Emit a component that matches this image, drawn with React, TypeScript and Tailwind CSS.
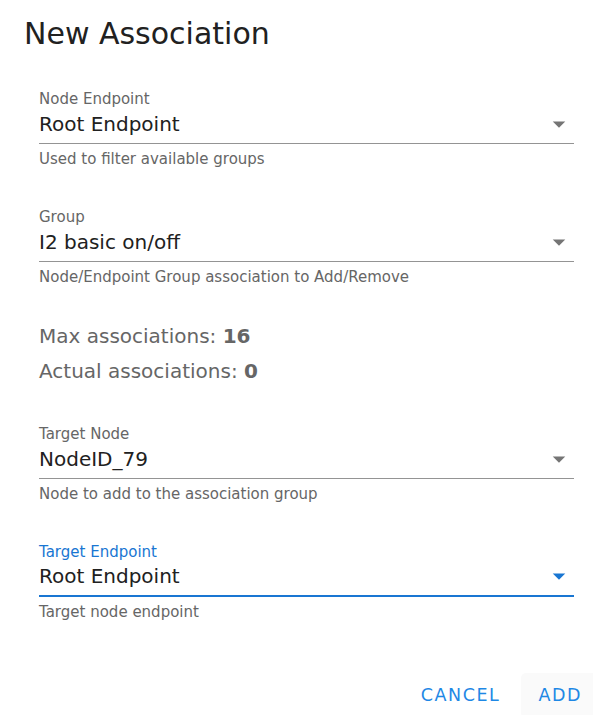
import React from "react";

function Arrow({ blue }: { blue?: boolean }) {
  return (
    <svg width="30" height="30" viewBox="0 0 24 24" className="shrink-0">
      <path d="M7 10l5 5 5-5z" fill={blue ? "#1976d2" : "#757575"} />
    </svg>
  );
}

function Field({
  label,
  value,
  hint,
  focused,
}: {
  label: string;
  value: string;
  hint: string;
  focused?: boolean;
}) {
  return (
    <div className="w-[535px]">
      <div
        className={`text-[15px] leading-[20px] ${focused ? "text-[#1976d2]" : "text-[#666666]"}`}
      >
        {label}
      </div>
      <div
        className={`flex items-center justify-between h-[35px] pb-[5px] ${
          focused ? "border-b-2 border-[#1976d2]" : "border-b border-[#949494]"
        }`}
      >
        <span className="text-[20px] leading-[30px] text-[#212121]">{value}</span>
        <Arrow blue={focused} />
      </div>
      <div className="text-[15px] leading-[20px] text-[#666666] mt-[5px]">{hint}</div>
    </div>
  );
}

export default function App() {
  return (
    <div
      className="w-[593px] h-[715px] overflow-hidden bg-white"
      style={{ fontFamily: '"DejaVu Sans", sans-serif' }}
    >
      <div className="pt-[14px] pl-[24px] text-[30px] leading-[40px] text-[#212121]">
        New Association
      </div>
      <div className="pl-[39px] pt-[35px] flex flex-col">
        <Field
          label="Node Endpoint"
          value="Root Endpoint"
          hint="Used to filter available groups"
        />
        <div className="h-[38px]" />
        <Field
          label="Group"
          value="I2 basic on/off"
          hint="Node/Endpoint Group association to Add/Remove"
        />
        <div className="mt-[34px] text-[20px] leading-[30px] text-[#666666]">
          Max associations: <span className="font-bold">16</span>
        </div>
        <div className="mt-[5px] text-[20px] leading-[30px] text-[#666666]">
          Actual associations: <span className="font-bold">0</span>
        </div>
        <div className="h-[38px]" />
        <Field
          label="Target Node"
          value="NodeID_79"
          hint="Node to add to the association group"
        />
        <div className="h-[38px]" />
        <Field
          label="Target Endpoint"
          value="Root Endpoint"
          hint="Target node endpoint"
          focused
        />
      </div>
      <div className="flex justify-end gap-[4px] mr-[-6px] mt-[51px]">
        <button className="h-[45px] px-[17px] rounded-[5px] text-[17.5px] tracking-[0.0892em] text-[#1e88e5]">
          CANCEL
        </button>
        <button className="h-[45px] px-[17px] rounded-[5px] text-[17.5px] tracking-[0.0892em] text-[#1e88e5] bg-[#fafafa]">
          ADD
        </button>
      </div>
    </div>
  );
}
